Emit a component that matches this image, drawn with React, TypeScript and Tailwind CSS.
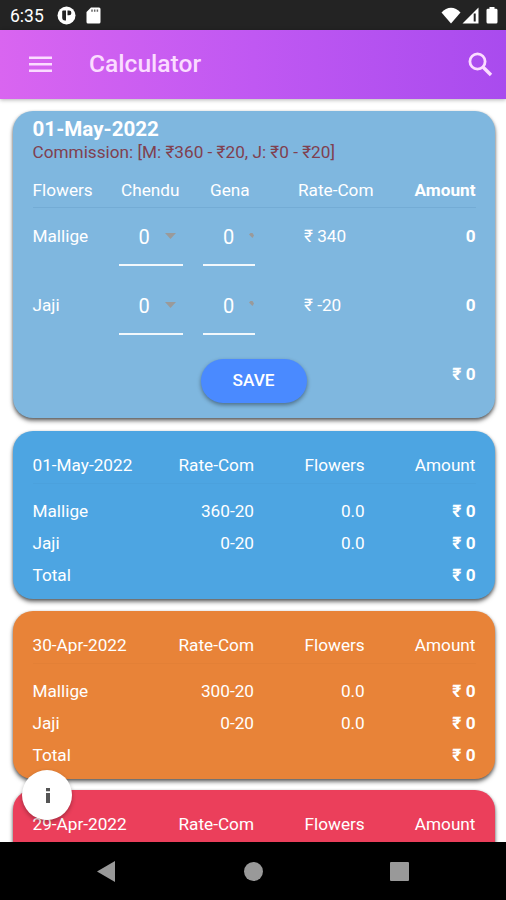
import React from "react";

const shadow = "shadow-[0_3px_4px_rgba(0,0,0,0.5),0_1px_3px_rgba(0,0,0,0.3)]";

function StatusBar() {
  return (
    <div className="flex h-[30px] shrink-0 items-center bg-[#232323] pl-[10px] pr-[8px] text-white">
      <span className="w-[47px] pt-px text-[17.500px] leading-[30px]">6:35</span>
      <svg className="mr-[10px]" width="19" height="19" viewBox="0 0 19 19">
        <circle cx="9.5" cy="9.5" r="9" fill="#fff" />
        <path d="M5.200 5.500Q5.200 4.500 6.200 4.500H9V14.500H8Q5.200 14.500 5.200 11.500z" fill="#232323" />
        <path d="M10.500 4.500h1.500a2.400 2.400 0 0 1 0 4.800h-1.500z" fill="#232323" />
      </svg>
      <svg width="15" height="17" viewBox="0 0 15 17">
        <path d="M5 .5h8a1.500 1.500 0 0 1 1.500 1.500v13a1.500 1.500 0 0 1-1.500 1.500H2A1.500 1.500 0 0 1 .5 15V5z" fill="#fff" />
        <path d="M6 2.500v2.300M8.700 2.500v2.300M11.400 2.500v2.300" stroke="#666" strokeWidth="1.500" />
      </svg>
      <div className="flex-1" />
      <svg width="20" height="17" viewBox="0 0 20 17">
        <path d="M.5 5.500C6-.8 14-.8 19.500 5.500L10 16.500z" fill="#fff" />
      </svg>
      <svg className="ml-px" width="17" height="17" viewBox="0 0 17 17">
        <path d="M16.500.5v16H.5z" fill="#fff" />
        <path d="M12.700 6.500v8" stroke="#232323" strokeWidth="2" />
      </svg>
      <svg className="ml-[7px]" width="12" height="17" viewBox="0 0 12 17">
        <path d="M3.500 0h5v1.700H10A1.500 1.500 0 0 1 11.500 3v12A1.500 1.500 0 0 1 10 16.500H2A1.500 1.500 0 0 1 .5 15V3A1.500 1.500 0 0 1 2 1.700h1.500z" fill="#fff" />
      </svg>
    </div>
  );
}

function AppBar() {
  return (
    <header className="relative z-10 flex h-[69px] shrink-0 items-center bg-linear-to-r from-[#d965f0] via-[#c058f2] to-[#a94bee] pl-[28.500px] pr-[13px] text-[#fbdcff] shadow-[0_1px_4px_rgba(0,0,0,0.3)]">
      <svg width="23" height="17" viewBox="0 0 23 17" fill="currentColor">
        <path d="M0 .5h23v2.600H0zM0 7h23v2.600H0zM0 13.500h23v2.600H0z" />
      </svg>
      <h1 className="ml-[37.500px] flex-1 text-[24.600px] font-medium leading-none">Calculator</h1>
      <svg width="25" height="25" viewBox="0 0 25 25" fill="none" stroke="currentColor">
        <circle cx="9.500" cy="9.500" r="7.600" strokeWidth="2.800" />
        <path d="M15.200 15.200L23 23" strokeWidth="3.400" />
      </svg>
    </header>
  );
}

function Caret({ narrow }: { narrow?: boolean }) {
  return narrow ? (
    <svg className="-mt-[2px] shrink-0" width="5" height="5" viewBox="0 0 5 5"><path d="M0 1.500L1.500 0h2L5 2.500L3.500 5z" fill="#9a9a9a" /></svg>
  ) : (
    <svg width="11" height="6" viewBox="0 0 11 6"><path d="M0 0h11L5.500 6z" fill="#9a9a9a" /></svg>
  );
}

function EntryRow({ name, rate }: { name: string; rate: string }) {
  return (
    <div className="grid h-[68.500px] grid-cols-[86px_84.500px_101px_1fr_auto]">
      <span className="leading-[57px]">{name}</span>
      <div className="flex h-[58px] w-[64.500px] items-center border-b-2 border-white/90 pl-[20px] text-[20px]">
        <span className="w-[26px] pt-[2px]">0</span>
        <Caret />
      </div>
      <div className="flex h-[58px] w-[51.500px] items-center border-b-2 border-white/90 pl-[20px] text-[20px]">
        <span className="w-[26px] shrink-0 pt-[2px]">0</span>
        <Caret narrow />
      </div>
      <span className="leading-[57px]">{rate}</span>
      <span className="font-bold leading-[57px]">0</span>
    </div>
  );
}

function EntryCard() {
  return (
    <section className={`h-[307px] shrink-0 rounded-[20px] bg-[#7fb7df] pl-[19.500px] pr-[19.500px] pt-[8px] ${shadow}`}>
      <h2 className="text-[20.600px] font-bold leading-[21px]">01-May-2022</h2>
      <p className="text-[17.200px] leading-[25px] text-[#80404f]">Commission: [M: ₹360 - ₹20, J: ₹0 - ₹20]</p>
      <div className="mt-[8px] grid h-[35px] grid-cols-[88.500px_89px_88px_1fr_auto] border-b border-[#74acd5] leading-[34px]">
        <span>Flowers</span>
        <span>Chendu</span>
        <span>Gena</span>
        <span>Rate-Com</span>
        <span className="font-bold">Amount</span>
      </div>
      <EntryRow name="Mallige" rate="₹ 340" />
      <EntryRow name="Jaji" rate="₹ -20" />
      <div className="flex justify-between pl-[168px] pt-[13px]">
        <button className="mt-px h-[44px] w-[106px] rounded-full bg-[#4a8aff] font-medium shadow-[0_2px_4px_rgba(0,0,0,0.4)]">SAVE</button>
        <span className="font-bold leading-[32px]">₹ 0</span>
      </div>
    </section>
  );
}

type Row = [name: string, rate: string, flowers: string];

function DayCard({ date, rows, color }: { date: string; rows: Row[]; color: string }) {
  const cells = "grid grid-cols-4";
  return (
    <section className={`h-[168px] shrink-0 rounded-[20px] px-[19.500px] pt-[16px] ${shadow} ${color}`}>
      <div className={`${cells} mb-[11px] h-[37px] border-b border-black/2 leading-[36px]`}>
        <span>{date}</span>
        <span className="text-right">Rate-Com</span>
        <span className="text-right">Flowers</span>
        <span className="text-right">Amount</span>
      </div>
      {rows.map(([name, r, f]) => (
        <div key={name} className={`${cells} h-[32px] leading-[32px]`}>
          <span>{name}</span>
          <span className="text-right">{r}</span>
          <span className="text-right">{f}</span>
          <span className="text-right font-bold">₹ 0</span>
        </div>
      ))}
    </section>
  );
}

const dayRows = (rate: string): Row[] => [
  ["Mallige", rate, "0.0"],
  ["Jaji", "0-20", "0.0"],
  ["Total", "", ""],
];

export default function App() {
  return (
    <div className="relative flex h-[900px] w-[506px] flex-col overflow-hidden bg-white font-['Roboto',sans-serif] text-[17.200px] text-white">
      <StatusBar />
      <AppBar />
      <main className="flex min-h-0 flex-1 flex-col gap-[12px] overflow-hidden pl-[13px] pr-[11px] pt-[12px]">
        <EntryCard />
        <div className="mt-px flex flex-col gap-[11.700px]">
          <DayCard date="01-May-2022" rows={dayRows("360-20")} color="bg-[#4da5e2]" />
          <DayCard date="30-Apr-2022" rows={dayRows("300-20")} color="bg-[#e88338]" />
          <DayCard date="29-Apr-2022" rows={[]} color="bg-[#eb3f5b]" />
        </div>
      </main>
      <button className="absolute left-[22px] top-[770px] flex size-[50px] items-center justify-center rounded-full bg-white shadow-[0_2px_4px_rgba(0,0,0,0.3)]">
        <svg className="ml-px" width="4" height="15" viewBox="0 0 4 15" fill="#555">
          <path d="M0 0h4v3.300H0zM0 5h4v10H0z" />
        </svg>
      </button>
      <nav className="relative flex h-[58px] shrink-0 items-center bg-black pl-[97px]">
        <svg width="18" height="21" viewBox="0 0 18 21"><path d="M18 0v21L0 10.500z" fill="#999" /></svg>
        <span className="ml-[129px] size-[19px] rounded-full bg-[#999]" />
        <span className="ml-[127px] size-[19px] rounded-[1px] bg-[#999]" />
      </nav>
    </div>
  );
}
